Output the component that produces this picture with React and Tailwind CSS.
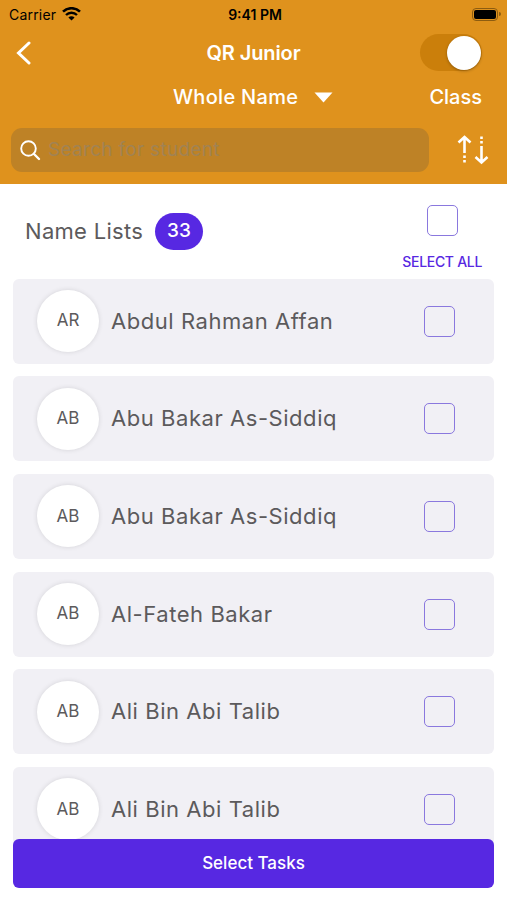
import React, { useState } from 'react';

const students = [
  { id: 1, initials: 'AR', name: 'Abdul Rahman Affan', spacing: 'tracking-[0.55px]' },
  { id: 2, initials: 'AB', name: 'Abu Bakar As-Siddiq', spacing: 'tracking-[0.55px]' },
  { id: 3, initials: 'AB', name: 'Abu Bakar As-Siddiq', spacing: 'tracking-[0.55px]' },
  { id: 4, initials: 'AB', name: 'Al-Fateh Bakar', spacing: 'tracking-[0.55px]' },
  { id: 5, initials: 'AB', name: 'Ali Bin Abi Talib', spacing: 'tracking-[0.55px]' },
  { id: 6, initials: 'AB', name: 'Ali Bin Abi Talib', spacing: 'tracking-[0.55px]' },
];

const StatusBar = () => (
  <div className="grid h-7 grid-cols-3 items-center pl-[9px] pr-[6px] text-[14px] text-black">
    <div className="flex items-center gap-[6px]">
      <span className="tracking-[0.2px]">Carrier</span>
      <svg width="19" height="14" viewBox="0 0 19 14" fill="none" stroke="currentColor">
        <path d="M1 4.6C5.6 0.1 13.4 0.1 18 4.6" strokeWidth="2.6" />
        <path d="M4 8C7.1 5 11.9 5 15 8" strokeWidth="2.4" />
        <path d="M6.4 10.5C8.2 8.9 10.8 8.9 12.6 10.5L9.5 13.6Z" fill="currentColor" stroke="none" />
      </svg>
    </div>
    <span className="text-center font-semibold">9:41 PM</span>
    <div className="flex items-center justify-end gap-px">
      <div className="h-[13px] w-[26px] rounded-[4px] border border-[#8d5c10] p-px">
        <div className="h-full rounded-[2px] bg-black" />
      </div>
      <div className="h-1 w-[2px] rounded-r bg-[#8d5c10]" />
    </div>
  </div>
);

const SortIcon = () => (
  <svg width="32" height="30" viewBox="0 0 32 30" fill="none" stroke="white" strokeWidth="2.6">
    <path d="M1.5 7.5L7.5 2L13.5 7.5M7.5 2.5V18" />
    <path d="M7.5 20.5V23M7.5 25V27.5" />
    <path d="M18.500 22L24.500 27.500L30.500 22M24.500 27V11" />
    <path d="M24.500 1.500V4M24.500 6V8.500" />
  </svg>
);

const CheckBox = ({ checked, onClick }) => (
  <button
    onClick={onClick}
    className={`h-[31px] w-[31px] rounded-[5px] border-[1.5px] border-[#8a78de] ${checked ? 'bg-[#5728e2]' : ''}`}
  />
);

const App = () => {
  const [selected, setSelected] = useState([]);
  const [classMode, setClassMode] = useState(true);
  const allSelected = selected.length === students.length;

  const toggle = (id) => {
    setSelected((prev) => (prev.includes(id) ? prev.filter((s) => s !== id) : [...prev, id]));
  };

  const toggleAll = () => {
    setSelected(allSelected ? [] : students.map((s) => s.id));
  };

  return (
    <div className="relative flex h-[900px] w-[507px] flex-col overflow-hidden bg-white font-['Inter',sans-serif] text-[#5c5a5c]">
      <header className="h-[184px] shrink-0 bg-[#df921d] text-white">
        <StatusBar />

        <div className="grid h-[49px] grid-cols-3 items-center pl-4 pr-[25px]">
          <svg width="15" height="24" viewBox="0 0 15 24" fill="none" stroke="white" strokeWidth="3" strokeLinecap="round">
            <path d="M13 2L2.500 12L13 22" />
          </svg>
          <span className="whitespace-nowrap pl-[9px] text-center text-[20px] font-semibold tracking-[-0.1px]">QR Junior</span>
          <button
            onClick={() => setClassMode(!classMode)}
            className={`flex h-[37px] w-[62px] items-center justify-self-end rounded-full bg-[#cb7f0b] px-[1px] ${classMode ? 'justify-end' : 'justify-start'}`}
          >
            <span className="h-[34px] w-[34px] rounded-full bg-white shadow-[0_1px_3px_rgba(0,0,0,0.3)]" />
          </button>
        </div>

        <div className="flex h-10 items-center pl-[173px] pr-[25px]">
          <span className="w-[125px] whitespace-nowrap text-[20px] font-medium tracking-[0.3px]">Whole Name</span>
          <svg className="ml-4" width="19" height="11" viewBox="0 0 19 11" fill="white">
            <path d="M0.500 0.500H18.500L9.500 10.500Z" />
          </svg>
          <span className="ml-auto text-[20px] font-medium">Class</span>
        </div>

        <div className="mt-[11px] flex items-center pl-[11px] pr-[18px]">
          <div className="flex h-[44px] w-[418px] items-center gap-[7px] rounded-[11px] bg-[#be8226] pl-[9px]">
            <svg width="21" height="21" viewBox="0 0 21 21" fill="none" stroke="white" strokeWidth="1.900" strokeLinecap="round">
              <circle cx="8.500" cy="8.500" r="7.300" />
              <path d="M14 14L19 19" strokeWidth="2.400" />
            </svg>
            <input
              placeholder="Search for student"
              className="w-[340px] bg-transparent text-[19px] tracking-[0.3px] outline-none placeholder:text-[#a18353]"
            />
          </div>
          <div className="ml-auto">
            <SortIcon />
          </div>
        </div>
      </header>

      <section className="flex h-[94.500px] shrink-0 justify-between pl-[25px] pr-[25px]">
        <div className="flex h-[94px] items-center gap-[11px]">
          <span className="w-[119px] whitespace-nowrap text-[22px] tracking-[0.3px]">Name Lists</span>
          <span className="flex h-[37px] w-[48px] items-center justify-center rounded-full bg-[#5728e2] text-[19px] font-medium text-white">33</span>
        </div>
        <div className="flex flex-col items-center pt-[21px]">
          <CheckBox checked={allSelected} onClick={toggleAll} />
          <span className="mt-4 text-[14px] font-medium leading-5 tracking-[-0.3px] text-[#5728e2]">SELECT ALL</span>
        </div>
      </section>

      <ul className="flex flex-col gap-[12.700px] px-[13px]">
        {students.map((student) => (
          <li key={student.id} className="flex h-[85px] shrink-0 items-center rounded-[6px] bg-[#f1f0f5] pl-6 pr-[39px]">
            <div className="flex h-[62px] w-[62px] items-center justify-center rounded-full bg-white text-[17px] shadow-[0_0_5px_rgba(0,0,0,0.12)]">
              {student.initials}
            </div>
            <span className={`ml-3 whitespace-nowrap text-[22px] ${student.spacing}`}>{student.name}</span>
            <div className="ml-auto flex">
              <CheckBox checked={selected.includes(student.id)} onClick={() => toggle(student.id)} />
            </div>
          </li>
        ))}
      </ul>

      {/* Fixed action over the list */}
      <div className="absolute inset-x-0 bottom-0 h-[61px] px-[13px]">
        <div className="absolute inset-x-0 bottom-0 h-[50px] bg-white" />
        <button className="relative h-[49px] w-full rounded-[6px] bg-[#5728e2] text-[17px] font-medium text-white">
          Select Tasks
        </button>
      </div>
    </div>
  );
};

export default App;
